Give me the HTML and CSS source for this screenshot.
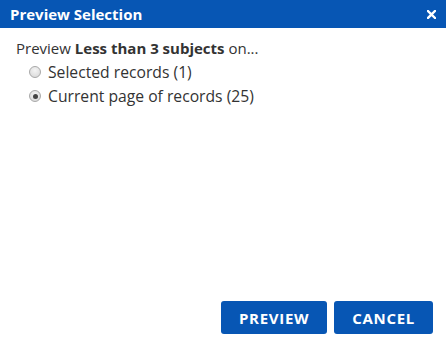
FILE: index.html
```html
<!DOCTYPE html>
<html lang="en">
<head>
  <meta charset="UTF-8" />
  <title>Preview Selection</title>
  <link rel="stylesheet" href="styles.css">
</head>
<body>

<div class="dialog">
  <header class="titlebar">
    <span class="title">Preview Selection</span>
    <svg class="close" width="9" height="9" viewBox="0 0 9 9">
      <path d="M1 1 L8 8 M8 1 L1 8" stroke="#fff" stroke-width="2.4" stroke-linecap="square"/>
    </svg>
  </header>

  <main class="content">
    <p class="lead">Preview <b>Less than 3 subjects</b> on...</p>
    <label class="option"><input type="radio" name="scope"> Selected records (1)</label>
    <label class="option"><input type="radio" name="scope" checked> Current page of records (25)</label>
  </main>

  <footer class="actions">
    <button class="btn">PREVIEW</button>
    <button class="btn">CANCEL</button>
  </footer>
</div>

</body>
</html>
```

FILE: styles.css
```css
* {
  margin: 0;
  padding: 0;
  box-sizing: border-box;
}

body, html {
  height: 100%;
  background: #fff;
  font-family: 'Open Sans', 'DejaVu Sans', sans-serif;
  color: #333;
}

.dialog {
  display: flex;
  flex-direction: column;
  height: 100%;
}

.titlebar {
  height: 28px;
  background: #0756b4;
  color: #fff;
  display: flex;
  align-items: center;
  justify-content: space-between;
  padding: 0 10px 0 10px;
}

.title {
  font-size: 15px;
  font-weight: 700;
}

.close {
  display: block;
  margin-top: 1px;
}

.content {
  flex: 1;
  padding: 10px 16px 0;
  font-size: 15px;
}

.lead {
  line-height: 20px;
  margin-bottom: 2px;
}

.lead b {
  font-weight: 700;
}

.option {
  display: flex;
  align-items: center;
  height: 24px;
  padding-left: 13px;
  font-size: 15.7px;
}

.option input {
  -webkit-appearance: none;
  appearance: none;
  width: 12px;
  height: 12px;
  border-radius: 50%;
  border: 1px solid #a8a8a8;
  background: radial-gradient(circle at 50% 35%, #f4f4f4, #d6d6d6);
  margin-right: 7px;
  position: relative;
}

.option input:checked::after {
  content: "";
  position: absolute;
  left: 2.5px;
  top: 2.5px;
  width: 5px;
  height: 5px;
  border-radius: 50%;
  background: #444;
}

.actions {
  display: flex;
  justify-content: flex-end;
  gap: 7px;
  padding: 0 13px 10px;
}

.btn {
  height: 33px;
  padding: 0 18px;
  background: #0756b4;
  color: #fff;
  border: none;
  border-radius: 3px;
  font-family: inherit;
  font-size: 15px;
  font-weight: 700;
  letter-spacing: 0.7px;
}
```
